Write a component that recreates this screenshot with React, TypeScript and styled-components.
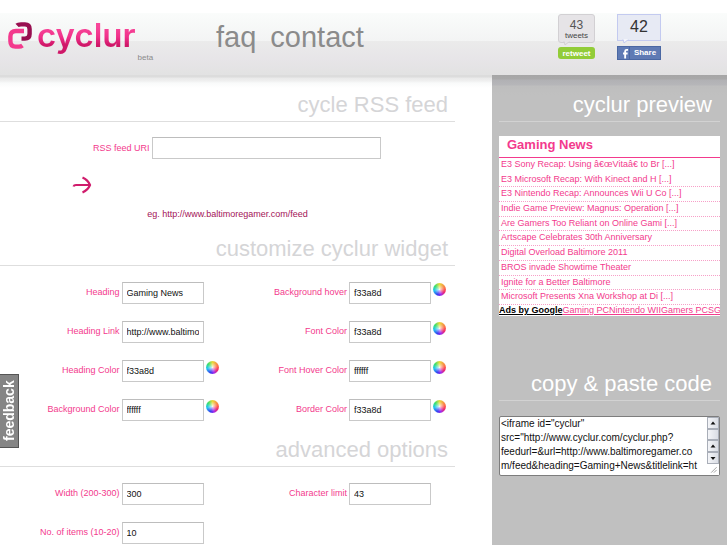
import React from 'react';
import styled, { createGlobalStyle, css } from 'styled-components';

const PINK = '#f33a8d';
const PLUM = '#a31457';

const GlobalStyle = createGlobalStyle`
  * { box-sizing: border-box; }
  body {
    margin: 0;
    background: #fff;
    font-family: "Liberation Sans", Arial, Helvetica, sans-serif;
    font-size: 9px;
    color: ${PINK};
  }
  a { color: inherit; }
`;

const Page = styled.div`
  min-height: 100vh;
  padding-top: 13px;
  display: flex;
  flex-direction: column;
`;

const Header = styled.header`
  display: flex;
  align-items: flex-start;
  height: 62px;
  padding: 0 66px 0 8px;
  background: linear-gradient(#fafcfb 0, #f3f4f4 28px, #ebebeb 28px, #e7e5e8 46px, #e2e2e2 100%);
`;

const Brand = styled.a`
  display: flex;
  width: 208px;
  text-decoration: none;
`;

const Mark = styled.svg`
  width: 26px;
  height: 30px;
  margin-top: 8px;
`;

const Wordmark = styled.span`
  margin-left: 3px;
  font: 600 33px/44px Inter, sans-serif;
  background: linear-gradient(#f8479a 14px, #f0308a 24px, #cf1768 32px, #cf1768 100%);
  background-clip: text;
  -webkit-background-clip: text;
  color: transparent;
`;

const Beta = styled.span`
  margin: 40px 0 0 2px;
  font-size: 8px;
  line-height: 10px;
  color: #8a8a8a;
`;

const Nav = styled.nav`
  display: flex;
  gap: 14px;
  flex: 1;
  a {
    font-size: 29px;
    line-height: 48px;
    color: #8b8b8b;
    text-decoration: none;
  }
`;

const Social = styled.div`
  display: flex;
  gap: 22px;
`;

const ShareGroup = styled.div<{ $wide?: boolean }>`
  display: flex;
  flex-direction: column;
  width: ${(p) => (p.$wide ? 44 : 37)}px;
  padding-top: 1px;
`;

const Count = styled.div<{ $blue?: boolean }>`
  position: relative;
  height: ${(p) => (p.$blue ? 27 : 29)}px;
  margin-bottom: ${(p) => (p.$blue ? 5 : 4)}px;
  border: 1px solid ${(p) => (p.$blue ? '#c3caf0' : '#d2d0d3')};
  border-radius: ${(p) => (p.$blue ? 0 : 3)}px;
  background: ${(p) => (p.$blue ? '#e7eaf4' : '#e6e4e7')};
  color: ${(p) => (p.$blue ? '#333' : '#555')};
  text-align: center;
  font-size: ${(p) => (p.$blue ? 16 : 12)}px;
  line-height: ${(p) => (p.$blue ? 24 : 14)}px;
  padding-top: ${(p) => (p.$blue ? 0 : 3)}px;
  small {
    display: block;
    font-size: 8px;
    line-height: 8px;
    color: #444;
  }
  svg {
    position: absolute;
    left: 4px;
    top: 100%;
    margin-top: -1px;
    width: 8px;
    height: 5px;
  }
`;

const RetweetButton = styled.button`
  height: 12px;
  padding: 0;
  border: 0;
  border-radius: 3px;
  background: #92cc38;
  color: #fff;
  font: bold 8px/11px "Liberation Sans", sans-serif;
`;

const ShareButton = styled.button`
  display: flex;
  height: 14px;
  padding: 0;
  border: 1px solid #4a67a3;
  background: #5f7ab4;
  color: #fff;
  font: bold 8px/12px "Liberation Sans", sans-serif;
  svg {
    width: 12px;
    height: 12px;
    border-right: 1px solid #4a67a3;
  }
  span { flex: 1; }
`;

const Columns = styled.div`
  display: grid;
  grid-template-columns: minmax(0, 1fr) 235px;
  flex: 1;
`;

const Main = styled.main`
  padding: 13px 37px 2px 0;
  background: linear-gradient(#dcdcdc 0, #dcdcdc 2px, #e9e9e9 3px, #f0f0f0 6px, #f9fafa 8px, #fff 13px);
`;

const Side = styled.aside`
  padding: 13px 7px 0;
  background: linear-gradient(#a6a6a6 0, #a9a9a9 4px, #b1b1b4 5px, #b6b6b9 10px, #bebebe 11px, #c0c0c0 20px);
`;

const Heading = styled.h2<{ $light?: boolean }>`
  margin: 0;
  height: 34px;
  padding-right: ${(p) => (p.$light ? 8 : 7)}px;
  border-bottom: 1px solid ${(p) => (p.$light ? '#d2d2d2' : '#dedede')};
  font-weight: normal;
  font-size: 22px;
  line-height: 33px;
  text-align: right;
  color: ${(p) => (p.$light ? '#fff' : '#d5d5d7')};
`;

const fieldBox = css`
  height: 22px;
  border: 1px solid #c9c9c9;
  border-top-color: #bdbdbd;
  border-radius: 0;
  background: #fff;
  padding: 0 4px;
  font: 9px "Liberation Sans", sans-serif;
  color: #111;
`;

const FeedForm = styled.form`
  height: 110px;
  padding-top: 15px;
`;

const FeedRow = styled.div`
  display: flex;
  align-items: center;
  gap: 2px;
  padding-left: 93px;
  input { ${fieldBox} width: 229px; }
`;

const GoButton = styled.button`
  display: block;
  margin: 17px 0 0 72px;
  padding: 0;
  border: 0;
  background: none;
  svg { display: block; width: 20px; height: 18px; }
`;

const Example = styled.p`
  margin: 14px 0 0;
  line-height: 12px;
  text-align: center;
  color: ${PLUM};
`;

const Fields = styled.form`
  display: grid;
  grid-template-columns: 1fr 1fr;
  row-gap: 17px;
  padding: 16px 0 12px;
`;

const Field = styled.div`
  display: grid;
  grid-template-columns: 1fr 82px 13px;
  gap: 2px;
  padding-right: 9px;
  label { text-align: right; line-height: 21px; }
  input { ${fieldBox} width: 82px; }
`;

const Wheel = styled.button`
  width: 13px;
  height: 13px;
  margin-top: 1px;
  padding: 0;
  border: 0;
  border-radius: 50%;
  background:
    radial-gradient(circle, rgba(255, 255, 255, 0.85) 0, rgba(255, 255, 255, 0.3) 35%, transparent 55%),
    conic-gradient(#e8d83a, #ff6a4c 80deg, #f02a6c 120deg, #a02af0 165deg, #3a3af0 200deg, #22c8f0 260deg, #3ce06a 310deg, #e8d83a);
`;

const Widget = styled.section`
  margin-top: 14px;
  height: 180px;
  background: #fff;
  overflow: hidden;
  h3 {
    margin: 0;
    height: 22px;
    padding-left: 8px;
    border-bottom: 1px solid ${PINK};
    font-size: 13px;
    line-height: 18px;
  }
`;

const NewsList = styled.ul`
  display: grid;
  grid-auto-rows: 1fr;
  height: 147px;
  margin: 0;
  padding: 0;
  list-style: none;
  li {
    padding-left: 2px;
    border-bottom: 1px dotted #f7a0c8;
    line-height: 13px;
    white-space: nowrap;
  }
  li:first-child { border-bottom-color: transparent; }
  a { text-decoration: none; }
`;

const Ads = styled.div`
  display: flex;
  line-height: 11px;
  white-space: nowrap;
  a:first-child { font-weight: bold; color: #000; }
`;

const CodeHeading = styled(Heading)`
  margin-top: 51px;
`;

const CodeFrame = styled.div`
  display: flex;
  height: 60px;
  margin-top: 15px;
  border: 1px solid #7d7d7d;
  border-radius: 2px;
  background: #fff;
  textarea {
    flex: 1;
    min-width: 0;
    padding: 0 0 0 1px;
    border: 0;
    resize: none;
    overflow: hidden;
    outline: 0;
    background: none;
    white-space: pre;
    font: 10px/14px "Liberation Sans", sans-serif;
    color: #111;
  }
`;

const Scroller = styled.div`
  display: flex;
  flex-direction: column;
  width: 12px;
  background: #fff;
  svg { display: block; width: 12px; height: 12px; }
`;

const ScrollPart = styled.button`
  height: 12px;
  padding: 0;
  border: 1px solid #a9aeb8;
  background: linear-gradient(90deg, #f4f5f8, #dadde4);
  svg { width: 10px; height: 10px; }
`;

const Feedback = styled.button`
  position: fixed;
  left: 0;
  top: 374px;
  width: 19px;
  height: 74px;
  padding: 0;
  border: 1px solid #555;
  border-width: 1px 0 1px 1px;
  background: #858585;
  color: #fff;
  font: bold 14px/18px "Liberation Sans", sans-serif;
  writing-mode: vertical-rl;
  transform: rotate(180deg);
`;

type FieldSpec = { id: string; label: string; value: string; wheel?: boolean };

const widgetFields: FieldSpec[] = [
  { id: 'heading', label: 'Heading', value: 'Gaming News' },
  { id: 'bghover', label: 'Background hover', value: 'f33a8d', wheel: true },
  { id: 'link', label: 'Heading Link', value: 'http://www.baltimoregamer.com' },
  { id: 'font', label: 'Font Color', value: 'f33a8d', wheel: true },
  { id: 'headcolor', label: 'Heading Color', value: 'f33a8d', wheel: true },
  { id: 'fonthover', label: 'Font Hover Color', value: 'ffffff', wheel: true },
  { id: 'bg', label: 'Background Color', value: 'ffffff', wheel: true },
  { id: 'border', label: 'Border Color', value: 'f33a8d', wheel: true },
];

const advancedFields: FieldSpec[] = [
  { id: 'width', label: 'Width (200-300)', value: '300' },
  { id: 'limit', label: 'Character limit', value: '43' },
  { id: 'items', label: 'No. of items (10-20)', value: '10' },
];

const news = [
  'E3 Sony Recap: Using â€œVitaâ€ to Br [...]',
  'E3 Microsoft Recap: With Kinect and H [...]',
  'E3 Nintendo Recap: Announces Wii U Co [...]',
  'Indie Game Preview: Magnus: Operation [...]',
  'Are Gamers Too Reliant on Online Gami [...]',
  'Artscape Celebrates 30th Anniversary',
  'Digital Overload Baltimore 2011',
  'BROS invade Showtime Theater',
  'Ignite for a Better Baltimore',
  'Microsoft Presents Xna Workshop at Di [...]',
];

const code = [
  '<iframe id="cyclur"',
  'src="http://www.cyclur.com/cyclur.php?',
  'feedurl=&url=http://www.baltimoregamer.co',
  'm/feed&heading=Gaming+News&titlelink=ht',
].join('\n');

function FieldGrid({ fields }: { fields: FieldSpec[] }) {
  return (
    <Fields>
      {fields.map((f) => (
        <Field key={f.id}>
          <label htmlFor={f.id}>{f.label}</label>
          <input id={f.id} defaultValue={f.value} />
          {f.wheel && <Wheel type="button" aria-label={`Pick ${f.label}`} />}
        </Field>
      ))}
    </Fields>
  );
}

function Pointer({ fill, stroke }: { fill: string; stroke: string }) {
  return (
    <svg viewBox="0 0 8 5" aria-hidden="true">
      <path d="M1 0 L2 4 L7 0" fill={fill} stroke={stroke} />
      <path d="M1 0 H7" stroke={fill} />
    </svg>
  );
}

function Arrow({ down }: { down?: boolean }) {
  return (
    <svg viewBox="0 0 10 10" aria-hidden="true">
      <path d={down ? 'M2.5 4h5L5 7z' : 'M2.5 6.5h5L5 3.5z'} fill="#111" />
    </svg>
  );
}

export default function App() {
  return (
    <Page>
      <GlobalStyle />
      <Header>
        <Brand href="#">
          <Mark viewBox="0 0 26 30" aria-hidden="true" fill="none" strokeWidth="4.4">
            <path d="M9 4.4 Q10 3.4 13 3.4 H17 Q21.600 3.4 21.600 8 V13 Q21.600 17.600 17 17.600 H13.500" stroke="#980f50" />
            <path d="M16 10 H8 Q2.400 10 2.400 15.500 V20 Q2.400 25.600 7.500 25.600 H11 Q13 25.600 14.500 24.500" stroke="#f33a8d" />
          </Mark>
          <Wordmark>cyclur</Wordmark>
          <Beta>beta</Beta>
        </Brand>
        <Nav>
          <a href="#faq">faq</a>
          <a href="#contact">contact</a>
        </Nav>
        <Social>
          <ShareGroup>
            <Count>
              43<small>tweets</small>
              <Pointer fill="#e6e4e7" stroke="#d2d0d3" />
            </Count>
            <RetweetButton type="button">retweet</RetweetButton>
          </ShareGroup>
          <ShareGroup $wide>
            <Count $blue>
              42
              <Pointer fill="#f4f5fa" stroke="#c3caf0" />
            </Count>
            <ShareButton type="button">
              <svg viewBox="0 0 12 12" aria-hidden="true">
                <path d="M11 2.5H9.5Q7.8 2.5 7.8 4.2V12M5.5 6.5H10.5" fill="none" stroke="#fff" strokeWidth="2" />
              </svg>
              <span>Share</span>
            </ShareButton>
          </ShareGroup>
        </Social>
      </Header>
      <Columns>
        <Main>
          <Heading>cycle RSS feed</Heading>
          <FeedForm>
            <FeedRow>
              <label htmlFor="feed">RSS feed URI</label>
              <input id="feed" />
            </FeedRow>
            <GoButton type="button" aria-label="Go">
              <svg viewBox="0 0 20 18" fill="none" stroke="#d01c6c" strokeWidth="2.2">
                <path d="M1.5 10.5 Q2 9 4 9 H17" />
                <path d="M10.500 1.500 Q16 4 18 9 Q16 14 10.500 16.500" />
              </svg>
            </GoButton>
            <Example>eg. http://www.baltimoregamer.com/feed</Example>
          </FeedForm>
          <Heading>customize cyclur widget</Heading>
          <FieldGrid fields={widgetFields} />
          <Heading>advanced options</Heading>
          <FieldGrid fields={advancedFields} />
        </Main>
        <Side>
          <Heading $light>cyclur preview</Heading>
          <Widget>
            <h3>Gaming News</h3>
            <NewsList>
              {news.map((n) => (
                <li key={n}><a href="#news">{n}</a></li>
              ))}
            </NewsList>
            <Ads>
              <a href="#ads">Ads by Google</a>
              <a href="#pc">Gaming PC</a>
              <a href="#wii">Nintendo WII</a>
              <a href="#pcs">Gamers PCS</a>
              <a href="#g">G</a>
            </Ads>
          </Widget>
          <CodeHeading $light>copy &amp; paste code</CodeHeading>
          <CodeFrame>
            <textarea aria-label="Widget code" defaultValue={code} spellCheck={false} />
            <Scroller>
              <ScrollPart type="button" aria-label="Scroll up"><Arrow /></ScrollPart>
              <ScrollPart type="button" aria-label="Scroll thumb" />
              <ScrollPart type="button" aria-label="Page up"><Arrow /></ScrollPart>
              <ScrollPart type="button" aria-label="Scroll down"><Arrow down /></ScrollPart>
              <svg viewBox="0 0 12 12" aria-hidden="true">
                <path d="M4 9.500L10 3.500M7 9.500L10 6.500" stroke="#999" />
              </svg>
            </Scroller>
          </CodeFrame>
        </Side>
      </Columns>
      <Feedback type="button">feedback</Feedback>
    </Page>
  );
}
